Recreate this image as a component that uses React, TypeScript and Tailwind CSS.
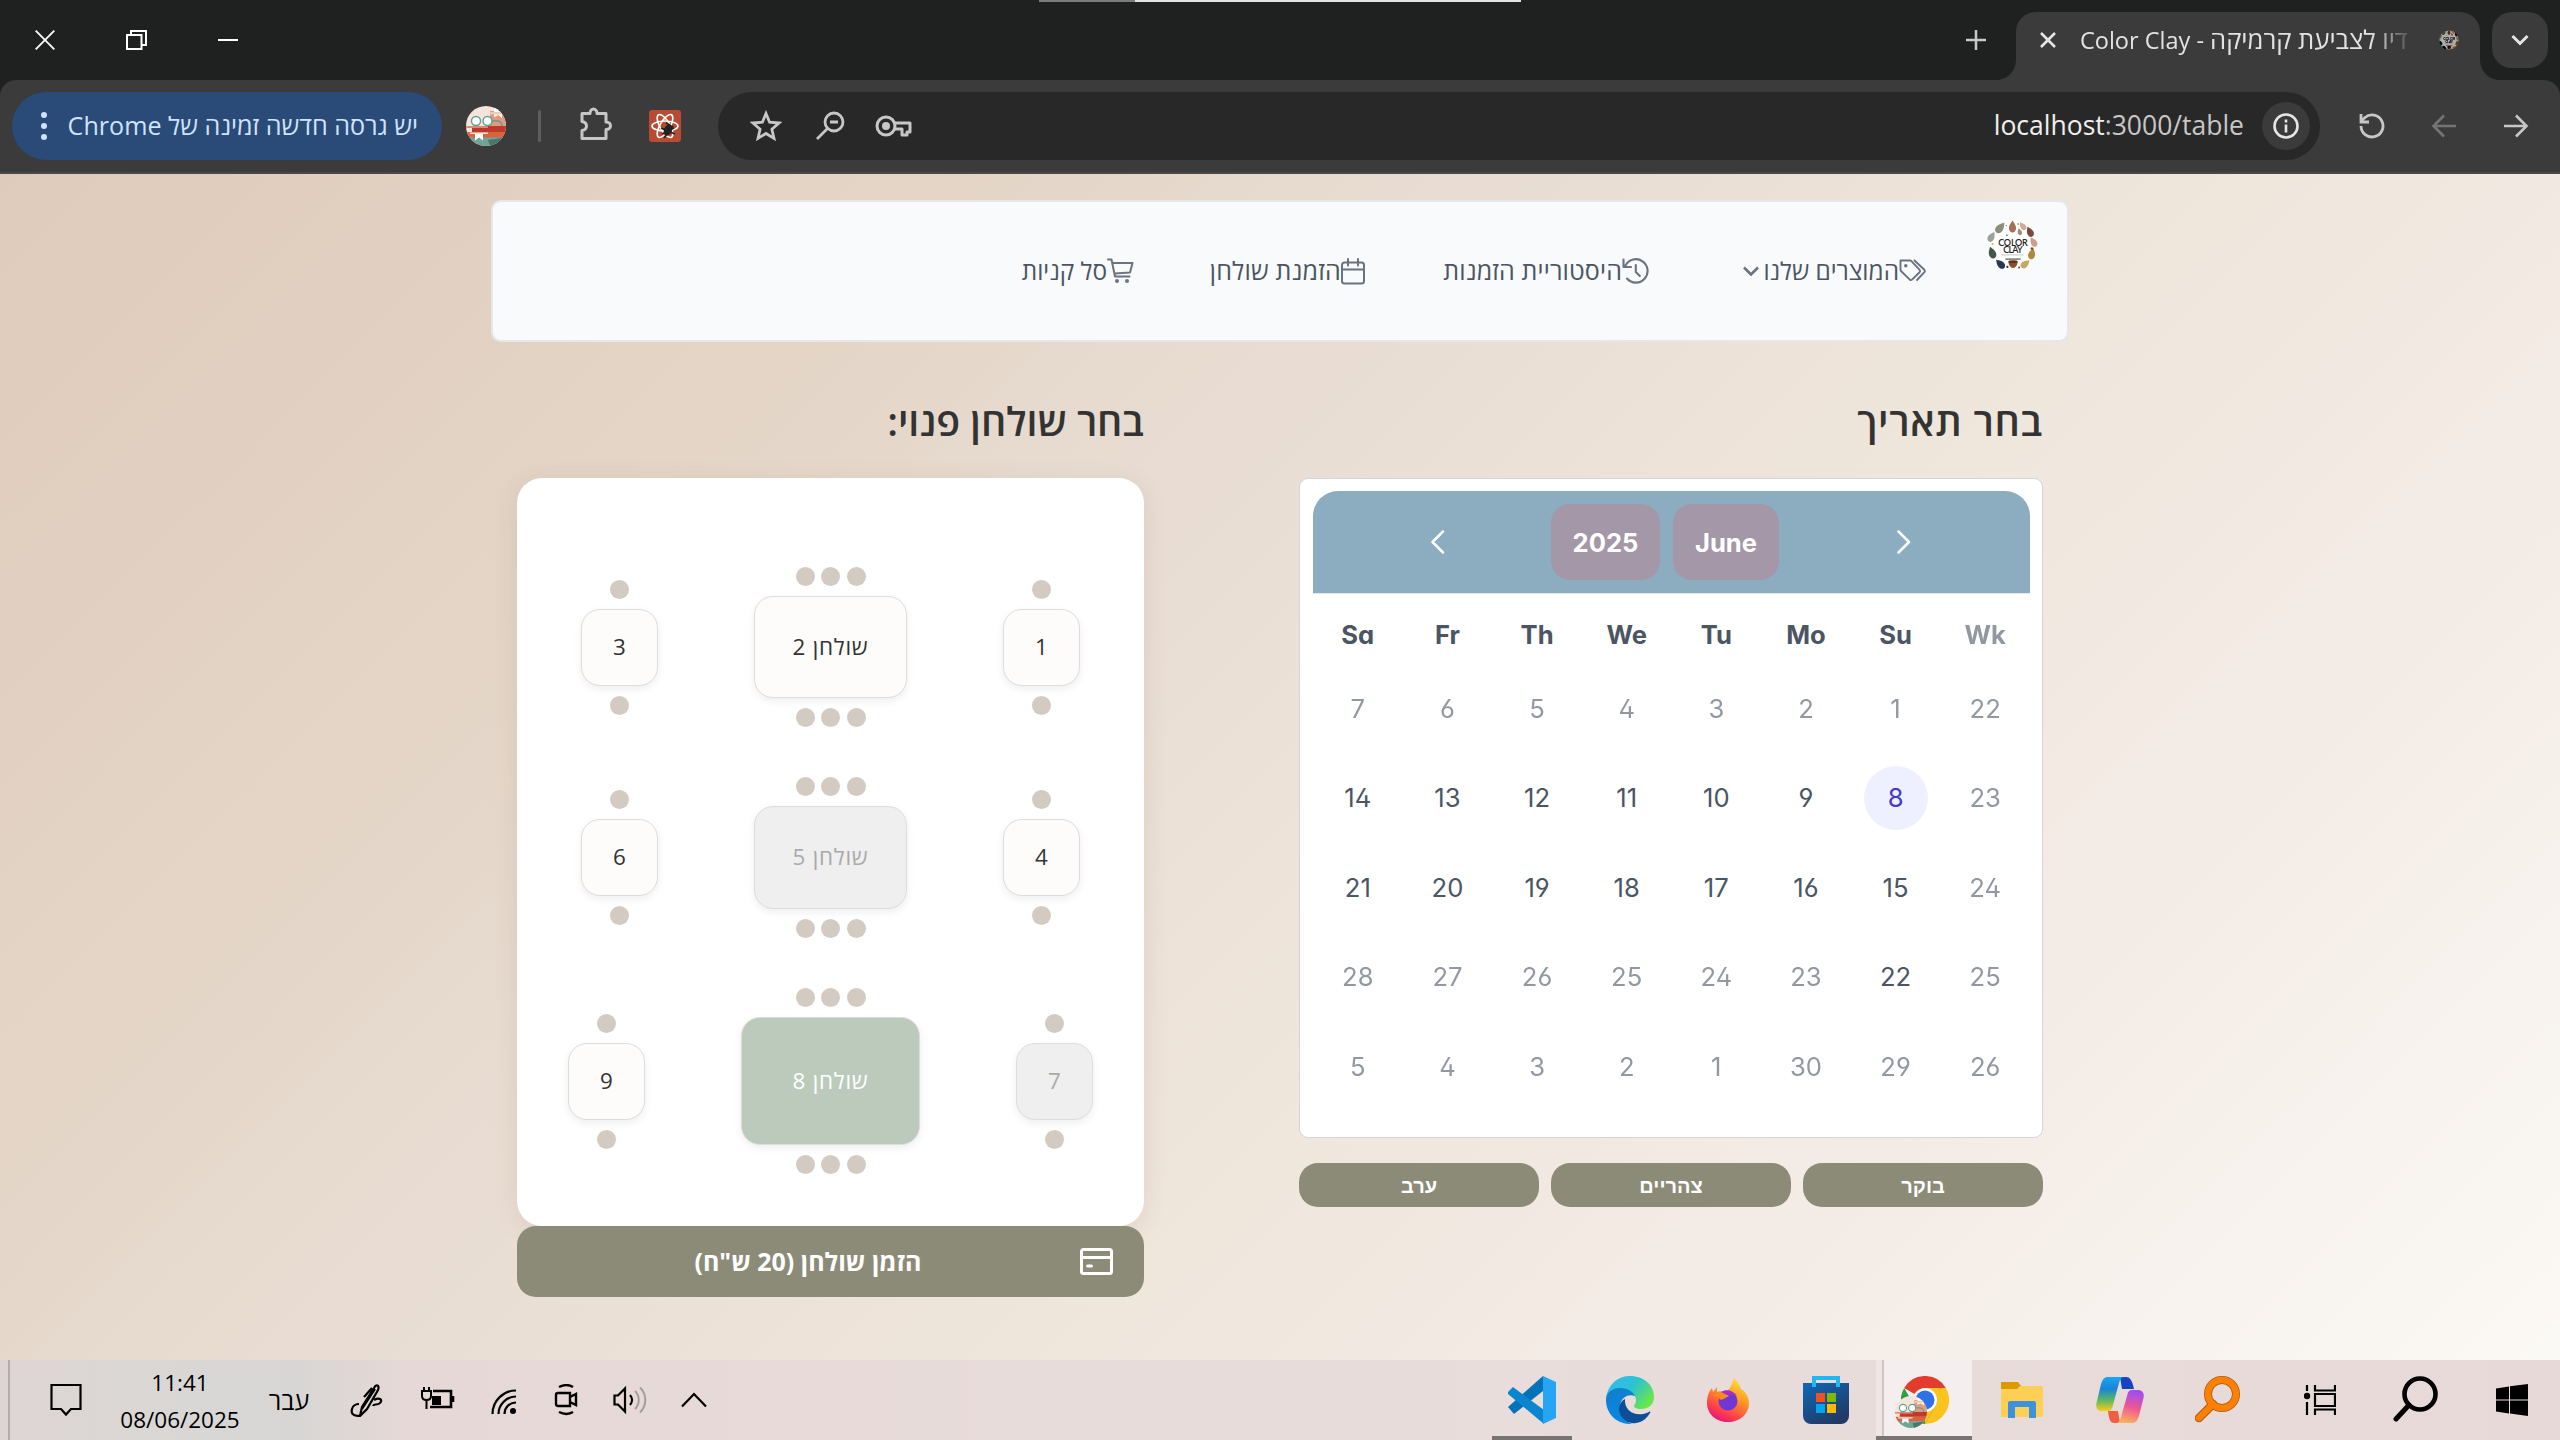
import React from "react";

type P = { c?: string; w: number; h: number; vb?: string; children: React.ReactNode };
const S = ({ c = "", w, h, vb, children }: P) => (
  <svg className={"block shrink-0 " + c} width={w} height={h} viewBox={vb || `0 0 ${w} ${h}`} fill="none">
    {children}
  </svg>
);

const Books = ({ size }: { size: number }) => (
  <S w={size} h={size} vb="0 0 40 40">
    <defs>
      <clipPath id="bk"><circle cx="20" cy="20" r="20" /></clipPath>
    </defs>
    <g clipPath="url(#bk)">
      <rect width="40" height="40" fill="#f5e4dc" />
      <path d="M24 5h16v16H24z" fill="#e39a80" />
      <path d="M28 2h8v10l-3.500-3-4.500 2z" fill="#fff" />
      <path d="M24 6h16v2.500H24z" fill="#f3c9b6" />
      <rect x="6" y="20" width="34" height="6" fill="#c03a2a" />
      <rect y="20" width="22" height="2" fill="#d98a78" />
      <rect y="26" width="40" height="6" fill="#d9623f" />
      <path d="M4 26.500h18v1.500H4z" fill="#f7e3d8" />
      <rect y="31.500" width="40" height="8.500" fill="#6fa597" />
      <path d="M22 34l14-2 4 8H24z" fill="#47786c" />
      <path d="M9 28h8v6.500l-4-3-4 3z" fill="#fff" />
      <g stroke="#5ea08f" strokeWidth="1.400" fill="#fff">
        <ellipse cx="10" cy="15" rx="4.500" ry="4.500" /><ellipse cx="21.500" cy="15" rx="4.500" ry="4.500" />
        <path d="M26 15c7-1 10 1 10 5" fill="none" />
      </g>
    </g>
  </S>
);

/* Each drop: centre x, centre y, rotation, scale, colour */
const drops: [number, number, number, number, string][] = [
  [12, 6.500, 40, 1.150, "#8b8f75"],
  [24, 5.500, 0, 1.100, "#a76f57"],
  [34, 5, -35, 0.850, "#d0ab95"],
  [31, 10.500, -15, 0.650, "#a58a80"],
  [41, 10.500, -25, 1, "#7b4a3f"],
  [44.500, 20.500, -30, 0.950, "#c9a28b"],
  [43, 32, 15, 1.050, "#b08a3c"],
  [36.500, 42, 50, 1, "#c7aa5e"],
  [12, 42, -45, 1.050, "#29364d"],
  [4, 31, -20, 1.100, "#43574a"],
  [3.500, 15.500, 30, 1, "#9aa39b"],
];
const ClayLogo = ({ size }: { size: number }) => (
  <S w={size} h={size} vb="0 0 48 48" c="overflow-visible">
    <circle cx="24" cy="24" r="23" fill="#fff" />
    {drops.map(([x, y, r, s, f]) => (
      <path key={f} transform={`translate(${x} ${y}) rotate(${r}) scale(${s})`} d="M0-5.500c1.200 2 3.200 4 3.200 6.800c0 2.400-1.400 4-3.200 4s-3.200-1.600-3.200-4c0-2.800 2-4.800 3.200-6.800z" fill={f} />
    ))}
    <path d="M20 39.500h9c0 4-2 6.500-4.500 6.500S20 43.500 20 39.500z" fill="#8a4f26" />
    <ellipse cx="24.500" cy="39.800" rx="4.500" ry="1.400" fill="#5e3318" />
    <g>
      <circle cx="18.500" cy="14" r=".9" fill="#7a8a78" /><circle cx="4.500" cy="22.500" r="1" fill="#d3b35c" />
      <circle cx="43" cy="27" r="1.200" fill="#7b3a2c" /><circle cx="19" cy="45" r="1.100" fill="#26344c" /><circle cx="30.500" cy="45.500" r="1" fill="#4a5a6a" />
      <circle cx="18" cy="4.500" r=".7" fill="#a0644c" /><circle cx="29.500" cy="3" r=".7" fill="#3f5546" />
    </g>
    <path d="M17 37.300h15" stroke="#333" strokeWidth="1" />
    <path d="M13 33.200h22" stroke="#a0a0a0" strokeWidth=".6" />
    <text x="24.500" y="24.200" textAnchor="middle" fontFamily="Lato" fontSize="8.800" fontWeight="600" fill="#222" textLength="29">COLOR</text>
    <text x="24.500" y="31.800" textAnchor="middle" fontFamily="Lato" fontSize="8.800" fontWeight="600" fill="#222" textLength="19">CLAY</text>
  </S>
);

const Chrome = () => (
  <S w={48} h={48}>
    <path d="M24 24L3.200 12A24 24 0 0 1 44.800 12z" fill="#e33b2e" />
    <path d="M24 24V12h20.800A24 24 0 0 1 24 48z" fill="#fcc31e" />
    <path d="M13.600 30L3.200 12A24 24 0 0 0 24 48l10.400-18z" fill="#2a9f48" />
    <path d="M34.400 18A12 12 0 0 1 34.400 30L24 48V24z" fill="#fcc31e" />
    <circle cx="24" cy="24" r="12" fill="#fff" />
    <circle cx="24" cy="24" r="9.500" fill="#2f72e8" />
  </S>
);

function TitleBar() {
  return (
    <div className="relative flex h-20 w-full shrink-0 bg-[#1f2120] text-white">
      <div className="absolute left-[1039px] top-0 h-[2px] w-[96px] bg-[#7c7c7c]" />
      <div className="absolute left-[1135px] top-0 h-[2px] w-[386px] bg-[#e4e4e4]" />
      <div className="flex h-20 items-center gap-[71px] pl-[35px]">
        <S w={20} h={20}><path d="M.700.700l18.600 18.600M19.300.700L.700 19.300" stroke="#fff" strokeWidth="1.800" /></S>
        <S w={21} h={20}><path d="M1 5h14.500v14H1zM5 5V1h15v14h-4" stroke="#fff" strokeWidth="2" /></S>
        <S w={20} h={20}><path d="M0 10h20" stroke="#fff" strokeWidth="2" /></S>
      </div>
      <div className="ml-auto flex h-20">
        <div className="flex h-20 w-[50px] items-center">
          <S w={20} h={20}><path d="M10 0v20M0 10h20" stroke="#c9c9c9" strokeWidth="2.500" /></S>
        </div>
        <div className="relative mt-3 flex h-[68px] w-[464px] items-center rounded-t-[20px] bg-[#3b3b3b]">
          <S c="absolute -left-5 bottom-0" w={20} h={20}><path d="M20 0v20H0A20 20 0 0 0 20 0z" fill="#3b3b3b" /></S>
          <S c="absolute -right-5 bottom-0" w={20} h={20}><path d="M0 0v20h20A20 20 0 0 1 0 0z" fill="#3b3b3b" /></S>
          <S c="mb-3 ml-6" w={16} h={16}><path d="M1 1l14 14M15 1L1 15" stroke="#e6e6e6" strokeWidth="2.600" /></S>
          <div className="mb-3 ml-6 flex w-[338px] items-baseline whitespace-nowrap text-[23.500px] leading-8 text-[#e3e3e3] [mask-image:linear-gradient(to_right,black_86%,transparent_99%)]" dir="ltr">
            <span>Color Clay -&nbsp;</span>
            <span className="text-[25.600px]">דיו לצביעת קרמיקה</span>
          </div>
          <div className="mb-3 ml-[21px] size-[20px] overflow-hidden rounded-full brightness-[.62] contrast-150"><ClayLogo size={20} /></div>
        </div>
        <div className="ml-3 mr-3 mt-3 flex size-14 items-center justify-center rounded-[20px] bg-[#3b3b3b]">
          <S w={18} h={12}><path d="M1.500 2L9 9.500 16.500 2" stroke="#e6e6e6" strokeWidth="3" /></S>
        </div>
      </div>
    </div>
  );
}

function Toolbar() {
  return (
    <div className="w-full shrink-0 bg-[#1f2120]">
      <div className="flex h-[94px] w-full items-center rounded-t-[16px] border-b-2 border-[#4a484a] bg-[#3b3b3b] pl-3 pr-[31px]">
        <div className="flex h-[68px] w-[430px] items-center rounded-full bg-[#2a4a77] pl-[29px] text-[25.100px] text-[#cfe3fd]">
          <S w={6} h={28}><g fill="#cfe3fd"><circle cx="3" cy="3" r="3" /><circle cx="3" cy="14" r="3" /><circle cx="3" cy="25" r="3" /></g></S>
          <span dir="rtl" className="ml-[21px] w-[350px] whitespace-nowrap text-right">יש גרסה חדשה זמינה של Chrome</span>
        </div>
        <div className="ml-6"><Books size={40} /></div>
        <div className="ml-[32px] h-8 w-[3px] rounded bg-[#5e5e5e]" />
        <S c="ml-[37px] -mt-1" w={34} h={34}>
          <path d="M4 7h8c0-6 7-6 7 0h9v8.500c6 0 6 7.500 0 7.500v9H4v-8c6-1 6-8 0-9z" transform="translate(0 -.500)" stroke="#c7c7c7" strokeWidth="3" strokeLinejoin="round" />
        </S>
        <S c="ml-[37px]" w={32} h={32}>
          <rect width="32" height="32" rx="3" fill="#b94a33" />
          <g stroke="#fff" strokeWidth="1.600">
            <ellipse cx="16" cy="16" rx="13" ry="5" /><ellipse cx="16" cy="16" rx="13" ry="5" transform="rotate(60 16 16)" /><ellipse cx="16" cy="16" rx="13" ry="5" transform="rotate(120 16 16)" />
          </g>
          <ellipse cx="19" cy="20" rx="4" ry="6" transform="rotate(25 19 20)" fill="#222" />
          <path d="M12 18l14 6M13 24l12-6M17 13l4 2M15 28l9-12" stroke="#222" strokeWidth="1.500" />
        </S>
        <div className="ml-[37px] flex h-[68px] w-[1602px] items-center rounded-full bg-[#282828] pl-[32px] pr-[10px]">
          <S w={32} h={32}><path d="M16 3.500l3.600 8.700 9.400.8-7.100 6.200 2.100 9.200-8-4.900-8 4.900 2.100-9.200L3 13l9.400-.8z" stroke="#c7c7c7" strokeWidth="2.800" /></S>
          <S c="ml-[34px]" w={30} h={30}><circle cx="18" cy="11" r="9" stroke="#c7c7c7" strokeWidth="2.800" /><path d="M12 17L1 28M14 11h8" stroke="#c7c7c7" strokeWidth="2.800" /></S>
          <S c="ml-[29px]" w={38} h={22}><circle cx="11" cy="11" r="9" stroke="#c7c7c7" strokeWidth="3" /><circle cx="11" cy="11" r="4" fill="#c7c7c7" /><path d="M20 8h15v9h-3v3h-5v-6h-7" stroke="#c7c7c7" strokeWidth="3" strokeLinejoin="round" /></S>
          <div className="ml-auto text-[26.500px] text-[#c7c7c7]"><span className="text-[#efefef]">localhost</span>:3000/table</div>
          <div className="ml-[18px] flex size-12 items-center justify-center rounded-full bg-[#3b3b3b]">
            <S w={26} h={26}><circle cx="13" cy="13" r="11.500" stroke="#e6e6e6" strokeWidth="2.600" /><path d="M13 11.500v8M13 6.500v3" stroke="#e6e6e6" strokeWidth="2.600" /></S>
          </div>
        </div>
        <S c="ml-auto" w={26} h={26}><path d="M2 13a11 11 0 1 0 4-8.500L2 8M2 1v8h8" stroke="#c7c7c7" strokeWidth="2.800" /></S>
        <S c="ml-[46px]" w={26} h={24}><path d="M25 12H3M13 1.500L2.500 12 13 22.500" stroke="#757575" strokeWidth="2.600" /></S>
        <S c="ml-[46px]" w={26} h={24}><path d="M1 12h22M13 1.500L23.500 12 13 22.500" stroke="#c7c7c7" strokeWidth="2.600" /></S>
      </div>
    </div>
  );
}

const navIcon = "text-[#6b7280]";
const TagsIcon = () => (
  <S c={navIcon} w={28} h={24}><g stroke="currentColor" strokeWidth="1.900" strokeLinejoin="round" strokeLinecap="round"><path d="M1.500 1.500H11c.6 0 1 .2 1.400.6l8.200 8.700c.7.700.7 1.600 0 2.400L13 20.600c-.7.700-1.600.7-2.200 0L2 12c-.4-.4-.5-.8-.5-1.400z" /><path d="M15.500 1.500l9.900 9.300c.7.700.7 1.600 0 2.400L18 21" /><circle cx="6.800" cy="6.800" r=".8" fill="currentColor" /></g></S>
);
const HistoryIcon = () => (
  <S c={navIcon} w={27} h={27}><path d="M3.500 7.500A11.700 11.700 0 1 1 5 20.500M1.500 1.500V9H9M13.800 7v7l4 4" stroke="currentColor" strokeWidth="2.100" strokeLinecap="round" strokeLinejoin="round" /></S>
);
const CalIcon = () => (
  <S c={navIcon} w={24} h={27}><path d="M3.500 4.500h17a2.500 2.500 0 0 1 2.500 2.500v16a2.500 2.500 0 0 1-2.500 2.500h-17A2.500 2.500 0 0 1 1 23V7a2.500 2.500 0 0 1 2.500-2.500zM1 11.500h22M7 1v6.500M17 1v6.500" stroke="currentColor" strokeWidth="2" strokeLinecap="round" /></S>
);
const CartIcon = () => (
  <S c={navIcon} w={27} h={26}><path d="M1 1.500h3.500l3.500 17h14.500M5.500 5h20l-2.500 9.500-15.500 1" stroke="currentColor" strokeWidth="2" strokeLinecap="round" strokeLinejoin="round" /><circle cx="10" cy="23" r="2" fill="currentColor" /><circle cx="20" cy="23" r="2" fill="currentColor" /></S>
);

function Nav() {
  return (
    <nav dir="rtl" className="flex h-[142px] w-[1578px] rounded-[10px] border-2 border-[#e5e7eb] bg-[#f9fafb] text-[25px] text-[#4b5563]">
      <div className="mr-[30px] mt-[19px]"><ClayLogo size={49} /></div>
      <div className="flex h-[138px] items-center">
        <div className="mr-[61px] flex items-center"><TagsIcon /><span className="w-[136px] whitespace-nowrap text-[24.400px]">המוצרים שלנו</span>
          <S c="mr-[4px]" w={16} h={10}><path d="M1 1.500l7 7 7-7" stroke="#6b7280" strokeWidth="2.600" /></S>
        </div>
        <div className="mr-[94px] flex items-center"><HistoryIcon /><span className="w-[180px] whitespace-nowrap tracking-[0.15px]">היסטוריית הזמנות</span></div>
        <div className="mr-[77px] flex items-center"><CalIcon /><span className="w-[132px] whitespace-nowrap tracking-[0.2px]">הזמנת שולחן</span></div>
        <div className="mr-[75px] flex items-center"><CartIcon /><span className="w-[86px] whitespace-nowrap text-[24.400px]">סל קניות</span></div>
      </div>
    </nav>
  );
}

const Seats = ({ n }: { n: number }) => (
  <div className="flex gap-[6.500px]">
    {Array.from({ length: n }, (_, i) => <i key={i} className="block size-[19px] rounded-full bg-[#d3cbc1]" />)}
  </div>
);
const kinds = {
  free: "bg-[#fdfcfb] text-[#333]",
  taken: "bg-[#efefef] text-[#aaa]",
  picked: "bg-[#bccabc] text-white",
};
const Table = ({ label, n = 1, size = "h-[77px] w-[77px]", kind = "free" }: { label: string; n?: number; size?: string; kind?: keyof typeof kinds }) => (
  <div className="flex flex-col items-center gap-[10px]">
    <Seats n={n} />
    <div className={`flex items-center justify-center rounded-[19px] border border-[#ddd] pb-px text-[22.400px] shadow-[0_3px_8px_rgba(0,0,0,0.07)] ${size} ${kinds[kind]} ${n > 1 ? "tracking-[0.75px]" : ""}`}>{label}</div>
    <Seats n={n} />
  </div>
);

const days: [string, boolean][][] = [
  [["22", false], ["1", false], ["2", false], ["3", false], ["4", false], ["5", false], ["6", false], ["7", false]],
  [["23", false], ["8", true], ["9", true], ["10", true], ["11", true], ["12", true], ["13", true], ["14", true]],
  [["24", false], ["15", true], ["16", true], ["17", true], ["18", true], ["19", true], ["20", true], ["21", true]],
  [["25", false], ["22", true], ["23", false], ["24", false], ["25", false], ["26", false], ["27", false], ["28", false]],
  [["26", false], ["29", false], ["30", false], ["1", false], ["2", false], ["3", false], ["4", false], ["5", false]],
];

function Calendar() {
  return (
    <div className="h-[660px] w-full rounded-[9px] border border-[#d1d5db] bg-white py-3 pl-[13px] pr-3 text-[25.600px] text-[#4b5563] [font-family:Inter,sans-serif] [font-feature-settings:'cv02','cv03','cv04','cv11']">
      <div className="flex h-[103px] items-center rounded-t-[25px] border-b border-[#e5e7eb] bg-[#8cacc0] pr-[119px] font-bold text-white">
        <S w={14} h={24}><path d="M1.500 1.500L12 12 1.500 22.500" stroke="#fff" strokeWidth="2.500" strokeLinecap="round" strokeLinejoin="round" /></S>
        <span className="mr-[118px] flex h-[76px] w-[106px] items-center justify-center rounded-[19px] bg-[#a497a7] pt-0.5">June</span>
        <span className="mr-[13px] flex h-[76px] w-[109px] items-center justify-center rounded-[19px] bg-[#a497a7] pt-0.5">2025</span>
        <S c="mr-[106px]" w={14} h={24}><path d="M12 1.500L1.500 12 12 22.500" stroke="#fff" strokeWidth="2.500" strokeLinecap="round" strokeLinejoin="round" /></S>
      </div>
      <div className="grid h-[70px] grid-cols-8 items-end pb-[10px] text-center font-bold">
        {["Wk", "Su", "Mo", "Tu", "We", "Th", "Fr", "Sa"].map((d) => (
          <span key={d} className={d === "Wk" ? "opacity-60" : ""}>{d}</span>
        ))}
      </div>
      {days.map((r, i) => (
        <div key={i} className="grid h-[89.600px] grid-cols-8 place-items-center">
          {r.map(([d, on], j) => (
            <span key={j} className={"flex size-16 items-center justify-center rounded-full " + (d === "8" ? "bg-[#eef0ff] text-[#4338ca]" : on ? "" : "opacity-60")}>{d}</span>
          ))}
        </div>
      ))}
    </div>
  );
}

function Page() {
  return (
    <main dir="rtl" className="flex h-[1186px] w-full shrink-0 flex-col items-center bg-[linear-gradient(135deg,#dfcbbb_0%,#e4d6c8_28%,#e8dcd2_38%,#efe6dc_60%,#f3ebe5_75%,#fbf9f4_100%)] pt-[26px]">
      <Nav />
      <div className="flex w-[1526px] justify-between pt-[48px] text-[#333]">
        <section className="w-[744px]">
          <h2 className="h-[88px] text-[39.500px] font-semibold leading-[62px] tracking-[0.7px]">בחר תאריך</h2>
          <Calendar />
          <div className="mt-[25px] flex gap-3 text-[20px] font-bold text-white [font-family:'Liberation_Sans',sans-serif]">
            {["בוקר", "צהריים", "ערב"].map((t) => (
              <button key={t} className="h-11 flex-1 rounded-[19px] bg-[#8c8b77] pt-0.5">{t}</button>
            ))}
          </div>
        </section>
        <section className="w-[627px]">
          <h2 className="h-[88px] text-[39.300px] font-semibold leading-[62px]">בחר שולחן פנוי:</h2>
          <div className="flex h-[748px] flex-col items-center gap-[50px] rounded-[25px] bg-white pt-[89px] shadow-[0_5px_25px_rgba(120,80,50,0.12)]">
            <div className="flex items-center gap-24">
              <Table label="1" /><Table label="שולחן 2" n={3} size="h-[102px] w-[153px]" /><Table label="3" />
            </div>
            <div className="flex items-center gap-24">
              <Table label="4" /><Table label="שולחן 5" n={3} size="h-[103px] w-[153px]" kind="taken" /><Table label="6" />
            </div>
            <div className="flex items-center gap-24">
              <Table label="7" kind="taken" /><Table label="שולחן 8" n={3} size="h-[128px] w-[179px]" kind="picked" /><Table label="9" />
            </div>
          </div>
          <button className="flex h-[71px] w-full items-center rounded-[19px] bg-[#8c8b77] text-[25px] font-bold text-white">
            <S c="mr-[31px]" w={33} h={27}><path d="M3.500 1.500h26a2 2 0 0 1 2 2v20a2 2 0 0 1-2 2h-26a2 2 0 0 1-2-2v-20a2 2 0 0 1 2-2zM1.500 9.500h30M7.500 18h4" stroke="#fff" strokeWidth="3" strokeLinecap="round" /></S>
            <span className="mr-[72px] w-[400px] text-center">הזמן שולחן (20 ש"ח)</span>
          </button>
        </section>
      </div>
    </main>
  );
}

const Slot = ({ cls = "w-[98px]", children }: { cls?: string; children: React.ReactNode }) => (
  <div className={"flex h-20 items-center justify-center " + cls}>{children}</div>
);

function Taskbar() {
  return (
    <footer className="flex h-20 w-full shrink-0 items-center bg-[linear-gradient(90deg,#ddd5d3_0,#d9d7d5_180px,#d8d6d4_300px,#e5d8d6_400px,#e9dddc_1500px,#e6d9d8_2560px)] text-black">
      <div className="ml-2 h-20 w-[2px] bg-[#b3abab]" />
      <S c="ml-10" w={32} h={34}><path d="M1.500 2h29v24H21l-5 5.500-5-5.500H1.500z" stroke="#000" strokeWidth="2.200" /></S>
      <div className="ml-[30px] flex w-[136px] flex-col items-center whitespace-nowrap pt-px text-[22.500px] leading-[37px]"><span>11:41</span><span>08/06/2025</span></div>
      <span className="ml-[11px] w-[60px] pt-0.5 text-center text-[25px]">עבר</span>
      <S c="ml-[31px]" w={34} h={34}><path d="M10 33l2-9L24 5c2-4 6-3 4 2L17 26zM25 6L12 26M14 14l8-9M10 33C2 33 1 30 2 26s5-5 7-5M24 17c6-3 9 0 6 3s-6 0-7 3" stroke="#000" strokeWidth="2.200" /></S>
      <S c="ml-[37px]" w={34} h={26}><path d="M12 4h18v16H9M32 9v6" stroke="#000" strokeWidth="2.600" /><path d="M11 9h9v9h-9z" fill="#000" /><path d="M3 0v4M8 0v4M1 4h9v5c0 3-2 4-4.500 4S1 12 1 9zM5.500 13v9" stroke="#000" strokeWidth="2" /></S>
      <S c="ml-[36px] mt-1" w={26} h={26}><g stroke="#000" strokeWidth="2.200"><path d="M1.500 25C1.500 12 12 1.500 25 1.500" /><path d="M7.500 25c0-9.500 8-17.500 17.500-17.500" /><path d="M13.500 25c0-6.500 5-11.500 11.500-11.500" /></g><circle cx="22" cy="22" r="3" fill="#000" /></S>
      <S c="ml-[37px]" w={26} h={32}><path d="M5 3c5-2.500 10-2.500 14 0M5 28c5 2.500 10 2.500 14 0M4 9h12v13H4a2 2 0 0 1-2-2v-9a2 2 0 0 1 2-2zM16 13l6-3v11l-6-3" stroke="#000" strokeWidth="2.400" /></S>
      <S c="ml-[33px]" w={36} h={30}><path d="M1.500 10.500v9H5l7 7v-23l-7 7z" stroke="#000" strokeWidth="2.200" /><path d="M17 10c2.500 3 2.500 7 0 10" stroke="#000" strokeWidth="2" /><path d="M22 6c5 5 5 13 0 18M27 2.500c7 7 7 18 0 25" stroke="#a59c9c" strokeWidth="2" /></S>
      <S c="ml-[31px]" w={28} h={16}><path d="M2 14.500L14 2l12 12.500" stroke="#000" strokeWidth="2.200" /></S>

      <div className="ml-auto flex">
        <Slot cls="relative w-20">
          <S w={48} h={48}>
            <path d="M0 31L35 0v15L6 38z" fill="#0472b8" />
            <path d="M0 17c0-1 0-1 1-2l4-4 31 23v14L0 18z" fill="#0a86d0" /><path d="M35 0l13 6v36l-13 6z" fill="#25a5f3" />
          </S>
          <div className="absolute bottom-0 left-0 h-1 w-full bg-[#787476]" />
        </Slot>
        <Slot cls="ml-[9px] w-[98px]">
          <S w={48} h={48}>
            <defs>
              <linearGradient id="e1" x1="0" y1="0" x2="1" y2=".6"><stop stopColor="#35b8f5" /><stop offset=".55" stopColor="#2cc3d2" /><stop offset="1" stopColor="#69e64a" /></linearGradient>
              <linearGradient id="e2" x1="0" y1="0" x2=".3" y2="1"><stop stopColor="#0f7fc9" /><stop offset="1" stopColor="#0a86e6" /></linearGradient>
            </defs>
            <path d="M0 22C2 8 12 0 24 0c14 0 24 9 24 21 0 8-6 12-13 12-5 0-7-2-7-3 0-1 2-2 2-6 0-5-5-9-13-9C9 15 3 18 0 22z" fill="url(#e1)" />
            <path d="M0 24c0-8 7-12 14-12 8 0 13 4 15 8-8-3-16 3-15 13 1 8 7 14 13 15C11 49 0 38 0 24z" fill="url(#e2)" />
            <path d="M19 23c-6 3-7 10-5 15 3 7 10 10 16 9 7-1 11-5 14-10 1-1 0-2-1-1-12 6-25 0-24-13z" fill="#0d4f96" />
          </S>
        </Slot>
        <Slot>
          <S w={44} h={46}>
            <defs>
              <linearGradient id="f1" x1=".8" y1="0" x2=".3" y2="1"><stop stopColor="#ffe83a" /><stop offset=".4" stopColor="#ff9a22" /><stop offset=".75" stopColor="#ff4545" /><stop offset="1" stopColor="#e8127c" /></linearGradient>
            </defs>
            <path d="M28 1c4 4 6 8 7 11 5 3 8 8 8 14 0 11-9 19-21 19S1 37 1 26c0-7 2-12 5-15l1 4 4-5v5c2-1 4-1 6 0 4-1 7-3 8-6 1-3 2-5 3-8z" fill="url(#f1)" />
            <circle cx="22" cy="24" r="9.500" fill="#7137d4" />
            <path d="M13 15c5-1 8 2 10 4-4 2-5 3-8 4-2-2-5-4-8-4z" fill="#ff8a1c" />
            <path d="M15 15c5-3 12-2 16 4-3-2-6-1-8 0z" fill="#a12fd0" />
          </S>
        </Slot>
        <Slot>
          <S w={46} h={48}>
            <defs><linearGradient id="s1" x1="0" y1="0" x2=".6" y2="1"><stop stopColor="#0f69b8" /><stop offset="1" stopColor="#213a66" /></linearGradient></defs>
            <path d="M0 7h46v33a8 8 0 0 1-8 8H8a8 8 0 0 1-8-8z" fill="url(#s1)" />
            <path d="M11 11V2h24v9" stroke="#22b6f2" strokeWidth="4" />
            <path d="M13 17h9v9h-9z" fill="#f25022" /><path d="M24 17h9v9h-9z" fill="#7fba00" /><path d="M13 28h9v9h-9z" fill="#00a4ef" /><path d="M24 28h9v9h-9z" fill="#ffb900" />
          </S>
        </Slot>
        <div className="relative ml-px flex h-20 w-[96px] items-center justify-center border-l-[6px] border-[#efe5e5] bg-[#f4eeee] pr-[5px]">
          <div className="absolute left-0 top-0 h-20 w-[2px] bg-[#d3c4c4]" />
          <Chrome />
          <div className="absolute bottom-3 left-[13px]"><Books size={32} /></div>
          <div className="absolute -left-[6px] bottom-0 h-1 w-24 bg-[#787476]" />
        </div>
        <Slot cls="ml-px w-[98px]">
          <S w={42} h={36}>
            <path d="M0 0h17l4 5-4 3H0z" fill="#dd9a00" /><path d="M0 7h16l3-3h21a2 2 0 0 1 2 2v27a2 2 0 0 1-2 2H0z" fill="#fdcf54" />
            <path d="M7 36V21a2 2 0 0 1 2-2h24a2 2 0 0 1 2 2v15h-7V25H14v11z" fill="#3a93dc" />
          </S>
        </Slot>
        <Slot>
          <S w={48} h={46}>
            <defs>
              <linearGradient id="c1" x1="0" y1="0" x2="0" y2="1"><stop stopColor="#1ba6ef" /><stop offset=".35" stopColor="#1b84d8" /><stop offset=".65" stopColor="#55b36a" /><stop offset="1" stopColor="#f5cf18" /></linearGradient>
              <linearGradient id="c2" x1=".5" y1="0" x2=".3" y2="1"><stop stopColor="#a04cf0" /><stop offset=".5" stopColor="#ee5793" /><stop offset="1" stopColor="#fdb45a" /></linearGradient>
            </defs>
            <path d="M24 0h6c4 0 6 3 8 12H26z" fill="#1742c4" /><path d="M24 46h-6c-4 0-5-4-6-12h10z" fill="#ee5f42" />
            <path d="M12 0h16c-3 0-4 3-5 6l-6 22c-1 4-2 6-5 6H6c-5 0-7-4-5-10L5 7c2-5 3-7 7-7z" fill="url(#c1)" />
            <path d="M36 46H20c3 0 4-3 5-6l6-21c1-4 2-6 5-6h6c5 0 7 4 5 10l-4 16c-2 5-3 7-7 7z" fill="url(#c2)" />
          </S>
        </Slot>
        <Slot>
          <S w={46} h={50}><path d="M18 29L4 43" stroke="#a85a14" strokeWidth="8.500" strokeLinecap="round" /><circle cx="27" cy="19" r="14" stroke="#a85a14" strokeWidth="8" /><circle cx="27" cy="19" r="14" stroke="#ff7f00" strokeWidth="6.500" /><path d="M18 29L4 43" stroke="#ff7f00" strokeWidth="6.500" strokeLinecap="round" /></S>
        </Slot>
        <Slot>
          <S c="ml-2" w={32} h={32}><g stroke="#000" strokeWidth="2.200"><path d="M3 1v6M3 18v13M11 1v5.500h20V1M11 31v-5.500h20V31M11 10h20v12H11z" /></g><circle cx="3" cy="12" r="3.200" fill="#000" /></S>
        </Slot>
        <Slot>
          <S c="ml-1" w={46} h={50}><circle cx="27" cy="19" r="15.500" stroke="#000" strokeWidth="4.600" /><path d="M16 30L3 44" stroke="#000" strokeWidth="5" strokeLinecap="round" /></S>
        </Slot>
        <Slot cls="-mr-px w-[98px]">
          <S w={32} h={32}><path d="M0 4.500l13-2V15.500H0zM14 2.300L32 0v15.500H14zM0 16.500h13v13L0 27.500zM14 16.500h18V32l-18-2.400z" fill="#000" /></S>
        </Slot>
      </div>
    </footer>
  );
}

export default function App() {
  return (
    <div dir="ltr" className="flex h-[1440px] w-[2560px] flex-col overflow-hidden [font-family:'Open_Sans','Noto_Sans','DejaVu_Sans',sans-serif]">
      <TitleBar />
      <Toolbar />
      <Page />
      <Taskbar />
    </div>
  );
}
